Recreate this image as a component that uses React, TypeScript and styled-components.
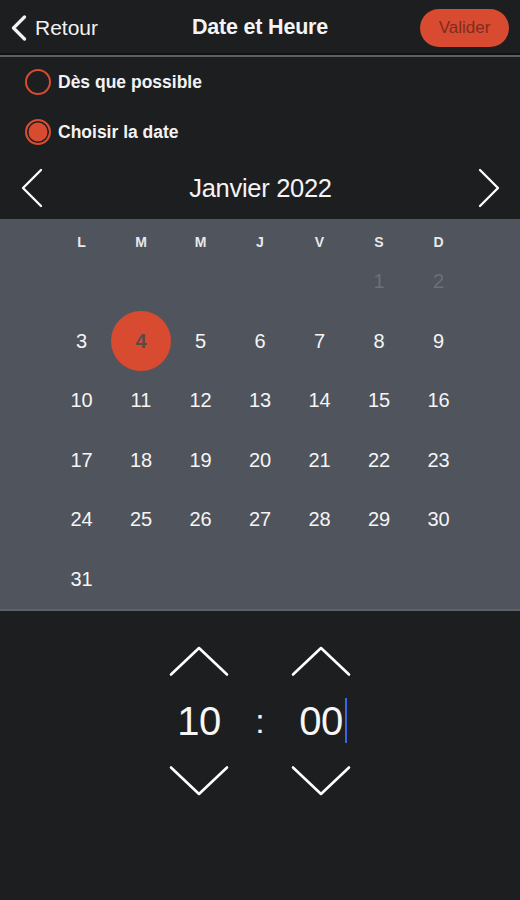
import React, { useState } from "react";
import styled, { createGlobalStyle } from "styled-components";

const GlobalStyle = createGlobalStyle`
  html, body { margin: 0; padding: 0; background: #1d1e20; }
  body { font-family: "Liberation Sans", Arial, Helvetica, sans-serif; color: #fff; }
  * { box-sizing: border-box; }
`;

const ORANGE = "#d94b30";

const Page = styled.div`
  width: 520px;
  min-height: 900px;
  background: #1d1e20;
  display: flex;
  flex-direction: column;
`;

const Header = styled.header`
  height: 57px;
  display: grid;
  grid-template-columns: 1fr auto 1fr;
  align-items: center;
  padding: 0 11px 0 11px;
  border-bottom: 2px solid #5e5f61;
  box-shadow: inset 0 -2px 0 #121314;
`;

const BackButton = styled.button`
  justify-self: start;
  display: flex;
  align-items: center;
  gap: 8px;
  background: none;
  border: 0;
  padding: 0;
  color: #f2f2f2;
  font-family: inherit;
  font-size: 21px;
  cursor: pointer;
`;

const Title = styled.h1`
  margin: 0;
  font-size: 21.5px;
  font-weight: 700;
  color: #f4f4f4;
  letter-spacing: -0.2px;
`;

const ValidateButton = styled.button`
  justify-self: end;
  width: 89px;
  height: 38px;
  border-radius: 19px;
  border: 0;
  background: ${ORANGE};
  color: #7e2b20;
  font-family: inherit;
  font-size: 17px;
  cursor: pointer;
  margin-top: 1px;
`;

const Options = styled.div`
  display: flex;
  flex-direction: column;
`;

const RadioRow = styled.label`
  height: 50px;
  display: flex;
  align-items: center;
  gap: 7px;
  padding-left: 25px;
  font-size: 17.5px;
  font-weight: 700;
  color: #f3f3f3;
  cursor: pointer;
`;

const RadioDot = styled.span<{ $checked: boolean }>`
  width: 26px;
  height: 26px;
  border-radius: 50%;
  border: 2px solid ${ORANGE};
  background: ${(p) => (p.$checked ? ORANGE : "transparent")};
  box-shadow: ${(p) => (p.$checked ? "inset 0 0 0 1.5px #1d1e20" : "none")};
  flex-shrink: 0;
`;

const MonthNav = styled.div`
  height: 62px;
  display: flex;
  align-items: center;
  justify-content: space-between;
  padding: 0 20px 0 21px;
`;

const NavArrow = styled.button`
  background: none;
  border: 0;
  padding: 0;
  display: flex;
  cursor: pointer;
`;

const MonthLabel = styled.div`
  font-size: 25.5px;
  color: #f4f4f4;
  letter-spacing: -0.3px;
`;

const CalendarPanel = styled.section`
  background: #50545c;
  border-bottom: 2px solid #5c6068;
  display: flex;
  flex-direction: column;
  align-items: center;
`;

const WeekRow = styled.div`
  display: grid;
  grid-template-columns: repeat(7, 59.5px);
  height: 33px;
  padding-top: 14px;
`;

const WeekDay = styled.div`
  text-align: center;
  font-size: 14px;
  line-height: 18px;
  font-weight: 700;
  color: #e8e9ea;
`;

const DaysGrid = styled.div`
  display: grid;
  grid-template-columns: repeat(7, 59.5px);
  grid-auto-rows: 59.5px;
`;

const DayCell = styled.div`
  display: flex;
  align-items: center;
  justify-content: center;
`;

const DayNumber = styled.span<{ $selected?: boolean; $muted?: boolean }>`
  width: 60px;
  height: 60px;
  border-radius: 50%;
  display: flex;
  align-items: center;
  justify-content: center;
  font-size: 20px;
  font-weight: ${(p) => (p.$selected ? 700 : 400)};
  background: ${(p) => (p.$selected ? ORANGE : "transparent")};
  color: ${(p) => (p.$selected ? "#5d4a47" : p.$muted ? "#6c7077" : "#f5f5f6")};
`;

const TimeSection = styled.section`
  display: flex;
  justify-content: center;
  align-items: center;
  padding-top: 34px;
`;

const TimeColumn = styled.div`
  width: 62px;
  display: flex;
  flex-direction: column;
  align-items: center;
`;

const Spinner = styled.button`
  background: none;
  border: 0;
  padding: 0;
  display: flex;
  cursor: pointer;
`;

const TimeValue = styled.div`
  position: relative;
  height: 88px;
  display: flex;
  align-items: center;
  font-size: 40px;
  color: #f6f6f6;
  letter-spacing: -0.5px;
`;

const Caret = styled.span`
  position: absolute;
  right: -4px;
  top: 21px;
  width: 2px;
  height: 45px;
  background: #3d63e6;
`;

const Colon = styled.div`
  width: 60px;
  text-align: center;
  font-size: 34px;
  color: #f2f2f2;
`;

const ChevronUp = () => (
  <svg width="62" height="32" viewBox="0 0 62 32">
    <polyline points="3,29.5 31,3 59,29.5" fill="none" stroke="#fff" strokeWidth="2.6" strokeLinecap="round" strokeLinejoin="round" />
  </svg>
);

const ChevronDown = () => (
  <svg width="62" height="32" viewBox="0 0 62 32">
    <polyline points="3,2.5 31,29 59,2.5" fill="none" stroke="#fff" strokeWidth="2.6" strokeLinecap="round" strokeLinejoin="round" />
  </svg>
);

const ChevronLeftBig = () => (
  <svg width="22" height="40" viewBox="0 0 22 40">
    <polyline points="20,2 2,20 20,38" fill="none" stroke="#fff" strokeWidth="2.3" strokeLinecap="round" strokeLinejoin="round" />
  </svg>
);

const ChevronRightBig = () => (
  <svg width="22" height="40" viewBox="0 0 22 40">
    <polyline points="2,2 20,20 2,38" fill="none" stroke="#fff" strokeWidth="2.3" strokeLinecap="round" strokeLinejoin="round" />
  </svg>
);

const BackChevron = () => (
  <svg width="16" height="26" viewBox="0 0 16 26">
    <polyline points="13.5,2 2.5,13 13.5,24" fill="none" stroke="#f2f2f2" strokeWidth="3.2" strokeLinecap="round" strokeLinejoin="round" />
  </svg>
);

const weekDays = ["L", "M", "M", "J", "V", "S", "D"];

type Cell = { n: number; muted?: boolean } | null;

const cells: Cell[] = [
  null, null, null, null, null, { n: 1, muted: true }, { n: 2, muted: true },
  ...Array.from({ length: 29 }, (_, i) => ({ n: i + 3 })),
];

export default function App() {
  const [mode, setMode] = useState<"asap" | "date">("date");
  const [selected, setSelected] = useState(4);
  const [hour, setHour] = useState(10);
  const [minute, setMinute] = useState(0);

  return (
    <Page>
      <GlobalStyle />
      <Header>
        <BackButton>
          <BackChevron />
          Retour
        </BackButton>
        <Title>Date et Heure</Title>
        <ValidateButton>Valider</ValidateButton>
      </Header>

      <Options>
        <RadioRow onClick={() => setMode("asap")}>
          <RadioDot $checked={mode === "asap"} />
          Dès que possible
        </RadioRow>
        <RadioRow onClick={() => setMode("date")}>
          <RadioDot $checked={mode === "date"} />
          Choisir la date
        </RadioRow>
      </Options>

      <MonthNav>
        <NavArrow aria-label="Mois précédent">
          <ChevronLeftBig />
        </NavArrow>
        <MonthLabel>Janvier 2022</MonthLabel>
        <NavArrow aria-label="Mois suivant">
          <ChevronRightBig />
        </NavArrow>
      </MonthNav>

      <CalendarPanel>
        <WeekRow>
          {weekDays.map((d, i) => (
            <WeekDay key={i}>{d}</WeekDay>
          ))}
        </WeekRow>
        <DaysGrid>
          {cells.map((c, i) => (
            <DayCell key={i}>
              {c && (
                <DayNumber
                  $muted={c.muted}
                  $selected={!c.muted && c.n === selected}
                  onClick={() => !c.muted && setSelected(c.n)}
                >
                  {c.n}
                </DayNumber>
              )}
            </DayCell>
          ))}
        </DaysGrid>
      </CalendarPanel>

      <TimeSection>
        <TimeColumn>
          <Spinner onClick={() => setHour((h) => (h + 1) % 24)}>
            <ChevronUp />
          </Spinner>
          <TimeValue>{String(hour).padStart(2, "0")}</TimeValue>
          <Spinner onClick={() => setHour((h) => (h + 23) % 24)}>
            <ChevronDown />
          </Spinner>
        </TimeColumn>
        <Colon>:</Colon>
        <TimeColumn>
          <Spinner onClick={() => setMinute((m) => (m + 5) % 60)}>
            <ChevronUp />
          </Spinner>
          <TimeValue>
            {String(minute).padStart(2, "0")}
            <Caret />
          </TimeValue>
          <Spinner onClick={() => setMinute((m) => (m + 55) % 60)}>
            <ChevronDown />
          </Spinner>
        </TimeColumn>
      </TimeSection>
    </Page>
  );
}
